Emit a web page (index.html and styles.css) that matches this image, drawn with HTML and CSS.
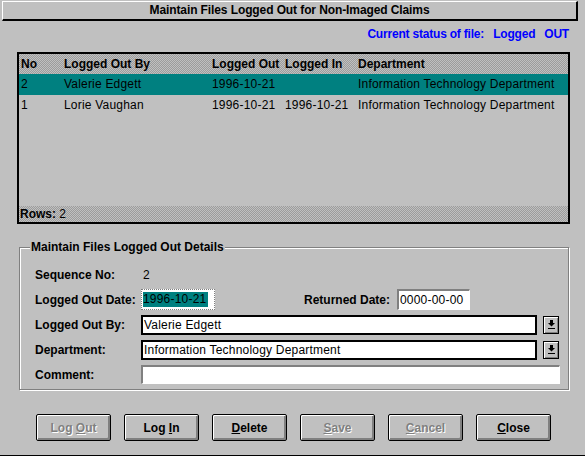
FILE: index.html
```html
<!DOCTYPE html>
<html>
<head>
<meta charset="utf-8">
<link rel="stylesheet" href="styles.css">
</head>
<body>
<div class="window">
  <div class="titlebar">Maintain Files Logged Out for Non-Imaged Claims</div>
  <div class="status"><span>Current status of file:</span><span>Logged</span><span>OUT</span></div>
  <div class="grid">
    <div class="row head"><span>No</span><span>Logged Out By</span><span>Logged Out</span><span>Logged In</span><span>Department</span></div>
    <div class="row sel"><span>2</span><span>Valerie Edgett</span><span>1996-10-21</span><span></span><span>Information Technology Department</span></div>
    <div class="row"><span>1</span><span>Lorie Vaughan</span><span>1996-10-21</span><span>1996-10-21</span><span>Information Technology Department</span></div>
    <div class="spacer"></div>
    <div class="foot"><b>Rows:</b> 2</div>
  </div>
  <fieldset class="group">
    <legend>Maintain Files Logged Out Details</legend>
    <div class="form">
      <label>Sequence No:</label>
      <div class="val">2</div>
      <label>Logged Out Date:</label>
      <div class="pair">
        <div class="field date focus"><span>1996-10-21</span></div>
        <label class="ret">Returned Date:</label>
        <div class="field date ret-in">0000-00-00</div>
      </div>
      <label>Logged Out By:</label>
      <div class="combo">
        <div class="field dd">Valerie Edgett</div>
        <div class="ddbtn"><svg width="7" height="9" viewBox="0 0 7 9"><rect x="2" y="0" width="3" height="3" fill="#000"/><polygon points="0,3 7,3 3.5,6.5" fill="#000"/><rect x="0" y="8" width="7" height="1" fill="#000"/></svg></div>
      </div>
      <label>Department:</label>
      <div class="combo">
        <div class="field dd">Information Technology Department</div>
        <div class="ddbtn"><svg width="7" height="9" viewBox="0 0 7 9"><rect x="2" y="0" width="3" height="3" fill="#000"/><polygon points="0,3 7,3 3.5,6.5" fill="#000"/><rect x="0" y="8" width="7" height="1" fill="#000"/></svg></div>
      </div>
      <label>Comment:</label>
      <div class="field comment"></div>
    </div>
  </fieldset>
  <div class="buttons">
    <button class="dis">Log <u>O</u>ut</button>
    <button>Log <u>I</u>n</button>
    <button><u>D</u>elete</button>
    <button class="dis"><u>S</u>ave</button>
    <button class="dis"><u>C</u>ancel</button>
    <button><u>C</u>lose</button>
  </div>
</div>
</body>
</html>
```

FILE: styles.css
```css
html, body {
  margin: 0;
  padding: 0;
  background: #c0c0c0;
}
.window {
  width: 585px;
  height: 456px;
  box-sizing: border-box;
  border-bottom: 1px solid #000;
  background: #c0c0c0;
  font-family: "Liberation Sans", Arial, sans-serif;
  font-size: 12px;
  color: #000;
  padding-top: 1px;
}
.titlebar {
  margin: 0 7px 0 2px;
  height: 20px;
  box-sizing: border-box;
  border-top: 1px solid #fff;
  border-left: 1px solid #fff;
  border-right: 2px solid #000;
  border-bottom: 2px solid #000;
  font-weight: bold;
  text-align: center;
  line-height: 17px;
  letter-spacing: -0.1px;
}
.status {
  margin-top: 6px;
  height: 14px;
  line-height: 14px;
  text-align: right;
  padding-right: 16px;
  color: #0000ff;
  font-weight: bold;
  letter-spacing: -0.2px;
}
.status span + span {
  margin-left: 9px;
}
.grid {
  margin: 11px 0 0 17px;
  width: 553px;
  height: 172px;
  box-sizing: border-box;
  border: 2px solid #000;
  display: flex;
  flex-direction: column;
}
.row {
  display: grid;
  grid-template-columns: 43px 148px 73px 73px 1fr;
  padding-left: 2px;
  height: 21px;
  line-height: 21px;
  white-space: nowrap;
  letter-spacing: 0.2px;
}
.head {
  height: 20px;
  line-height: 20px;
  font-weight: bold;
  letter-spacing: 0;
  background: conic-gradient(#c0c0c0 25%, #9c9c9c 0 50%, #c0c0c0 0 75%, #9c9c9c 0) 0 0 / 2px 2px;
}
.sel {
  background: #008080;
}
.spacer {
  flex: 1;
}
.foot {
  height: 16px;
  line-height: 16px;
  padding-left: 1px;
  background: conic-gradient(#c0c0c0 25%, #9c9c9c 0 50%, #c0c0c0 0 75%, #9c9c9c 0) 0 0 / 2px 2px;
}
.group {
  margin: 16px 0 0 19px;
  width: 550px;
  box-sizing: border-box;
  border: 1px solid #808080;
  box-shadow: inset 1px 1px 0 #fff, 1px 1px 0 #fff;
  padding: 10px 8px 4px 15px;
  min-width: 0;
}
.group legend {
  margin-left: -5px;
  padding: 0 1px;
  font-weight: bold;
  line-height: 14px;
  background: #c0c0c0;
}
.form {
  display: grid;
  grid-template-columns: 106px 1fr;
  grid-auto-rows: 21px;
  row-gap: 4px;
  align-items: center;
}
.form label {
  font-weight: bold;
}
.val {
  padding-left: 2px;
}
.pair {
  display: flex;
  align-items: center;
}
.field {
  height: 21px;
  box-sizing: border-box;
  background: #fff;
  border-style: solid;
  border-width: 2px 1px 1px 2px;
  border-color: #808080 #fff #fff #808080;
  line-height: 18px;
  padding-left: 1px;
  white-space: nowrap;
  overflow: hidden;
  letter-spacing: 0.2px;
}
.date {
  width: 74px;
}
.focus {
  border: 1px dotted #808080;
  padding: 2px 0 0 1px;
  line-height: 15px;
}
.focus span {
  display: inline-block;
  background: #008080;
  color: #000;
  height: 15px;
  padding-right: 2px;
}
.ret {
  margin-left: 89px;
  width: 93px;
}
.ret-in {
  width: 73px;
}
.combo {
  display: flex;
  align-items: center;
}
.dd {
  width: 396px;
  height: 20px;
  border: 2px solid #000;
  line-height: 16px;
}
.ddbtn {
  margin-left: 6px;
  width: 16px;
  height: 18px;
  box-sizing: border-box;
  border: 1px solid #000;
  box-shadow: inset 1px 1px 0 #fff, inset -1px -1px 0 #808080;
  display: flex;
  align-items: center;
  justify-content: center;
}
.comment {
  width: 419px;
  height: 19px;
}
.buttons {
  display: flex;
  gap: 13px;
  padding-left: 36px;
  margin-top: 24px;
}
.buttons button {
  width: 75px;
  height: 27px;
  padding: 0;
  background: #c0c0c0;
  border: 1px solid #000;
  border-radius: 2px;
  box-shadow: inset 1px 1px 0 #fff, inset -2px -2px 0 #808080;
  font-family: "Liberation Sans", Arial, sans-serif;
  font-size: 12px;
  font-weight: bold;
  color: #000;
}
.buttons button.dis {
  color: #808080;
  text-shadow: 1px 1px 0 #fff;
}
```
